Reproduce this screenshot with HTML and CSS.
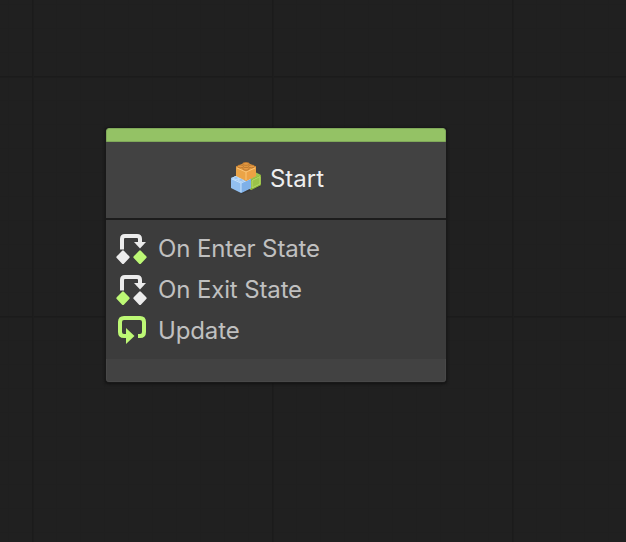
FILE: index.html
```html
<!DOCTYPE html>
<html lang="en">
<head>
<meta charset="utf-8">
<title>State Graph</title>
<link rel="stylesheet" href="styles.css">
</head>
<body>
<main class="canvas">
  <section class="node">
    <div class="node-accent"></div>
    <header class="node-header">
      <svg class="blocks" viewBox="0 0 32 32">
        <path d="M3 26L12 31.5L31 22V24L12 32Z" fill="#292a2c" opacity=".6"/>
        <path d="M19 14L25 10L31 13V23L21 28L18 26Z" fill="#9cc34b"/>
        <path d="M21 18L31 13V23L21 28Z" fill="#85ad35"/>
        <path d="M22 18.5L30 14.5V22L22 26Z" fill="#9bc34a" stroke="#b9da69"/>
        <path d="M1 16L11 12L21 16V26L11 31L1 26Z" fill="#92bff0"/>
        <path d="M1 16L11 12L21 16L11 20Z" fill="#a9cff5"/>
        <path d="M11 20L21 16V26L11 31Z" fill="#7eb0e8"/>
        <path d="M2 17L11 21L20 17M11 21V30" fill="none" stroke="#c6e2fc"/>
        <ellipse cx="6" cy="16" rx="2.5" ry="1.3" fill="#8fbced" stroke="#d8ecff" stroke-width=".6"/>
        <ellipse cx="11" cy="18" rx="2.5" ry="1.3" fill="#8fbced" stroke="#d8ecff" stroke-width=".6"/>
        <path d="M6 4.5L16 .5L26 4.5V14L16 19L6 14Z" fill="#eba447"/>
        <path d="M6 5L16 .5L26 5L16 9.5Z" fill="#e39a3f"/>
        <path d="M16 9.5L26 5V14L16 19Z" fill="#eda144"/>
        <path d="M7 6L16 10L25 6M16 10V18" fill="none" stroke="#fbc577"/>
        <g fill="#e79b43" stroke="#b4722d" stroke-width=".8"><ellipse cx="16" cy="1.9" rx="3.4" ry="1.4"/><ellipse cx="10.5" cy="4.4" rx="3" ry="1.4"/><ellipse cx="21.5" cy="4.4" rx="3" ry="1.4"/><ellipse cx="16" cy="6.8" rx="3.2" ry="1.4"/></g>
      </svg>
      <h1 class="node-title">Start</h1>
    </header>
    <ul class="events">
      <li class="event">
        <svg class="event-icon" viewBox="0 0 32 32"><path class="line" d="M6 17.5V7Q6 4 9 4H21Q24 4 24 7V12"/><path class="light" d="M18 10H30L24 16.5Z"/><path class="light diamond" d="M7 19.6L12.4 25.2L7 30.8L1.6 25.2Z"/><path class="green diamond" d="M24 19.6L29.4 25.2L24 30.8L18.6 25.2Z"/></svg>
        <span class="event-name">On Enter State</span>
      </li>
      <li class="event">
        <svg class="event-icon" viewBox="0 0 32 32"><path class="line" d="M6 17.5V7Q6 4 9 4H21Q24 4 24 7V12"/><path class="light" d="M18 10H30L24 16.5Z"/><path class="green diamond" d="M7 19.6L12.4 25.2L7 30.8L1.6 25.2Z"/><path class="light diamond" d="M24 19.6L29.4 25.2L24 30.8L18.6 25.2Z"/></svg>
        <span class="event-name">On Exit State</span>
      </li>
      <li class="event">
        <svg class="event-icon" viewBox="0 0 32 32"><path class="line loop" d="M11 22H8Q4 22 4 18V8Q4 4 8 4H24Q28 4 28 8V18Q28 22 24 22H22"/><path class="green" d="M10 14L18.5 22L10 30Z"/></svg>
        <span class="event-name">Update</span>
      </li>
    </ul>
    <footer class="node-footer"></footer>
  </section>
</main>
</body>
</html>
```
FILE: styles.css
```css
* { box-sizing: border-box; }

body {
  margin: 0;
  font-family: Inter, "Liberation Sans", sans-serif;
}

.canvas {
  height: 542px;
  padding: 128px 0 0 106px;
  overflow: hidden;
  background-color: #202020;
  background-image:
    linear-gradient(90deg, #1b1b1b 1px, #1d1d1d 1px, #1d1d1d 2px, transparent 2px),
    linear-gradient(#1b1b1b 1px, #1d1d1d 1px, #1d1d1d 2px, transparent 2px),
    linear-gradient(90deg, #1f1f1f 1px, transparent 1px),
    linear-gradient(#1f1f1f 1px, transparent 1px);
  background-size: 240px 240px, 240px 240px, 24px 24px, 24px 24px;
  background-position: 32px 76px, 32px 76px, 8px 4px, 8px 4px;
}

.node {
  display: flex;
  flex-direction: column;
  width: 340px;
  height: 254px;
  overflow: hidden;
  border-radius: 3px;
  background: #424242;
  box-shadow: 0 0 0 1px #191919, 0 1px 3px 1px #111;
}

.node-accent {
  height: 14px;
  border: 1px solid #80a95a;
  border-radius: 3px 3px 0 0;
  background: #94c265;
}

.node-header {
  display: flex;
  align-items: center;
  justify-content: center;
  gap: 8px;
  height: 78px;
  padding: 0 0 2px 2px;
  border-bottom: 2px solid #1c1c1c;
}

.blocks {
  width: 32px;
  height: 32px;
  margin-bottom: 3px;
}

.node-title {
  margin: 0;
  font-size: 24px;
  font-weight: 400;
  line-height: 32px;
  color: #eee;
}

.events {
  display: grid;
  grid-auto-rows: 32px;
  gap: 9px;
  height: 139px;
  margin: 0;
  padding: 12px 10px;
  list-style: none;
  background: #3c3c3c;
}

.event {
  display: flex;
  align-items: center;
  gap: 10px;
  font-size: 24px;
  line-height: 32px;
  letter-spacing: -0.13px;
  color: #c0c0c0;
}

.event-name { padding-top: 2px; }

.event-icon {
  width: 32px;
  height: 32px;
}

.line {
  fill: none;
  stroke: #ececec;
  stroke-width: 4;
}

.loop { stroke: #bdf875; }
.light { fill: #ececec; }
.green { fill: #bdf875; }

.diamond {
  stroke: #ececec;
  stroke-width: 2.4;
  stroke-linejoin: round;
}

.green.diamond { stroke: #bdf875; }

.node-footer {
  flex: 1;
  border: 1px solid #484848;
  border-top: 0;
  border-radius: 0 0 3px 3px;
}
```
